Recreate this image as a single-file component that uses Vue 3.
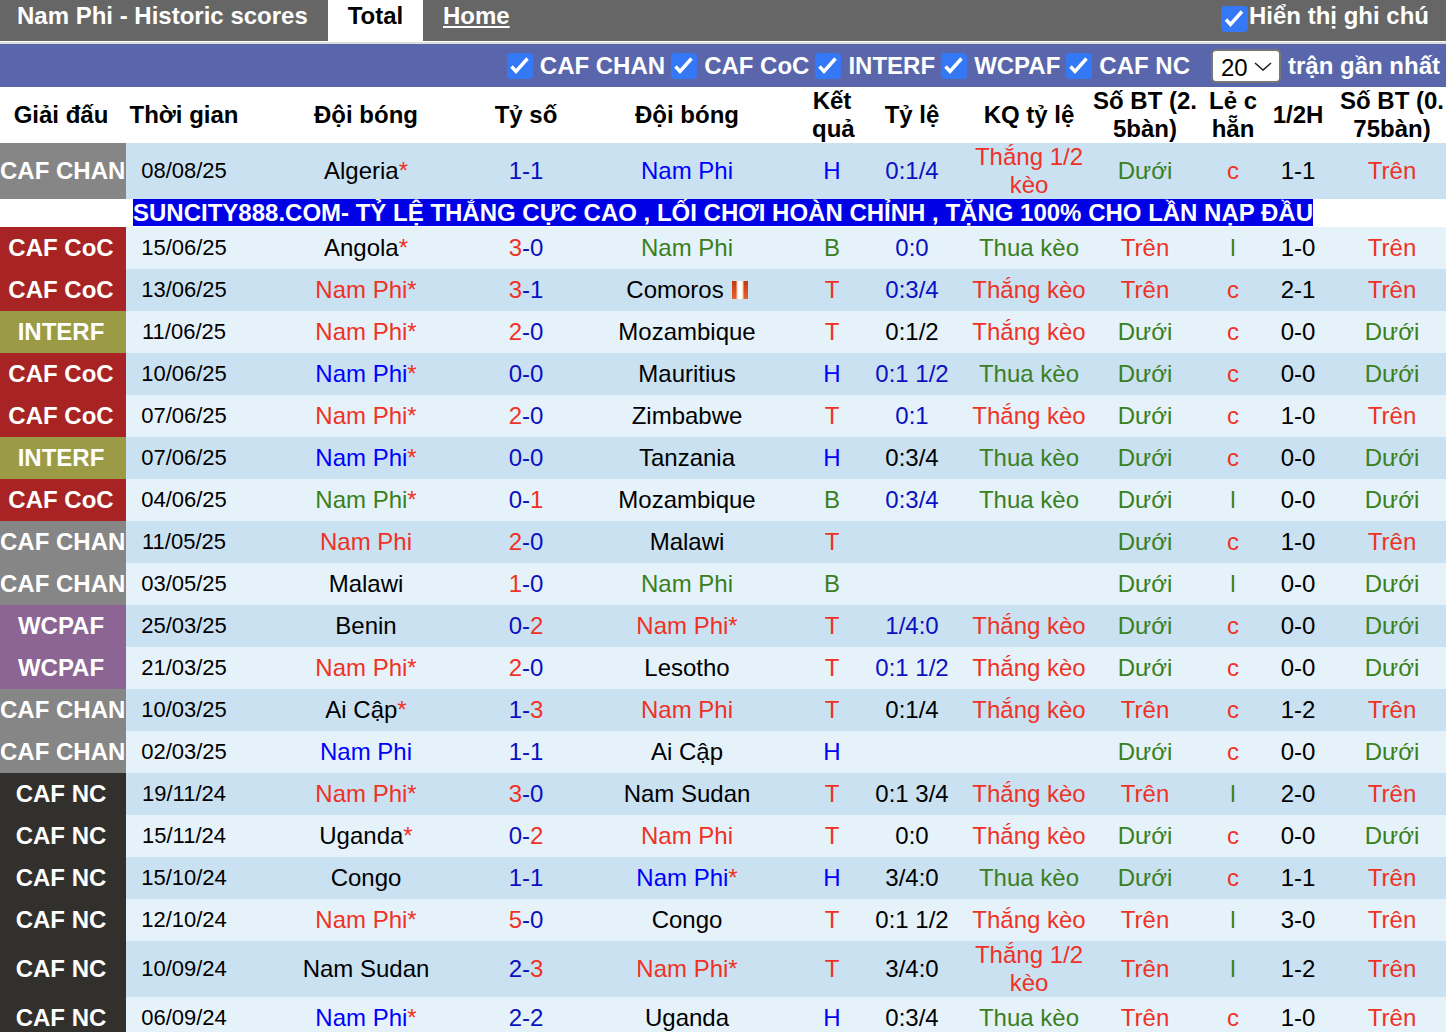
<template>
  <div class="page">
    <div class="top-bar">
      <div class="title">Nam Phi - Historic scores</div>
      <div class="tab active">Total</div>
      <a class="tab home" href="#">Home</a>
      <label class="note-toggle">
        <span class="check">
          <svg viewBox="0 0 26 26"><path d="M4.5 13.5 L9 18.5 L20.5 5.5" fill="none" stroke="#fff" stroke-width="3.4" /></svg>
        </span>
        Hiển thị ghi chú
      </label>
    </div>

    <div class="filter-bar">
      <label v-for="name in filters" :key="name" class="filter">
        <span class="check">
          <svg viewBox="0 0 26 26"><path d="M4.5 13.5 L9 18.5 L20.5 5.5" fill="none" stroke="#fff" stroke-width="3.4" /></svg>
        </span>
        {{ name }}
      </label>
      <div class="select-box">
        <span>20</span>
        <svg class="chevron" viewBox="0 0 18 9"><path d="M1 1 L9 8 L17 1" fill="none" stroke="#222" stroke-width="1.6" /></svg>
      </div>
      <span class="recent">trận gần nhất</span>
    </div>

    <table class="scores">
      <colgroup>
        <col v-for="(w, i) in colWidths" :key="i" :style="{ width: w + 'px' }" />
      </colgroup>
      <thead>
        <tr>
          <th v-for="h in headers" :key="h">{{ h }}</th>
        </tr>
      </thead>
      <tbody>
        <template v-for="(m, i) in matches" :key="i">
          <tr :class="i % 2 === 0 ? 'dark' : 'light'">
            <td class="league" :class="leagueClass[m.league]"><span>{{ m.league }}</span></td>
            <td class="date">{{ m.date }}</td>
            <td :class="teamColor(m, m.home)">{{ m.home }}<span v-if="m.homeStar" class="star">*</span></td>
            <td>
              <span :class="scoreParts(m).leftClass">{{ scoreParts(m).left }}</span><span class="blue">-</span><span :class="scoreParts(m).rightClass">{{ scoreParts(m).right }}</span>
            </td>
            <td :class="teamColor(m, m.away)">
              {{ m.away }}<span v-if="m.awayStar" class="star">*</span>
              <span v-if="m.flag" class="flag"></span>
            </td>
            <td :class="resultColor[m.result]">{{ m.result }}</td>
            <td :class="{ blue: m.oddsBlue }">{{ m.odds }}</td>
            <td :class="m.kq.startsWith('Thua') ? 'green' : 'red'">{{ m.kq }}</td>
            <td :class="m.bt === 'Dưới' ? 'green' : 'red'">{{ m.bt }}</td>
            <td :class="m.lc === 'c' ? 'red' : 'green'">{{ m.lc }}</td>
            <td>{{ m.half }}</td>
            <td :class="m.bt2 === 'Dưới' ? 'green' : 'red'">{{ m.bt2 }}</td>
          </tr>
          <tr v-if="i === 0" class="ad-row">
            <td colspan="12"><div class="ad">SUNCITY888.COM- TỶ LỆ THẮNG CỰC CAO , LỐI CHƠI HOÀN CHỈNH , TẶNG 100% CHO LẦN NẠP ĐẦU</div></td>
          </tr>
        </template>
      </tbody>
    </table>
  </div>
</template>

<script setup>
const filters = ['CAF CHAN', 'CAF CoC', 'INTERF', 'WCPAF', 'CAF NC']

const colWidths = [126, 116, 248, 72, 250, 40, 120, 114, 118, 58, 72, 112]

const headers = [
  'Giải đấu', 'Thời gian', 'Đội bóng', 'Tỷ số', 'Đội bóng', 'Kết quả',
  'Tỷ lệ', 'KQ tỷ lệ', 'Số BT (2. 5bàn)', 'Lẻ c hẵn', '1/2H', 'Số BT (0. 75bàn)'
]

const leagueClass = {
  'CAF CHAN': 'chan',
  'CAF CoC': 'coc',
  INTERF: 'interf',
  WCPAF: 'wcpaf',
  'CAF NC': 'nc'
}

const resultColor = { T: 'red', H: 'bright', B: 'green' }

const row = (league, date, home, score, away, result, odds, oddsBlue, kq, bt, lc, half, bt2, flag = false) => ({
  league,
  date,
  home: home.replace('*', ''),
  homeStar: home.endsWith('*'),
  score,
  away: away.replace('*', ''),
  awayStar: away.endsWith('*'),
  result,
  odds,
  oddsBlue,
  kq,
  bt,
  lc,
  half,
  bt2,
  flag
})

const W = 'Thắng kèo'
const L = 'Thua kèo'
const WH = 'Thắng 1/2 kèo'

const matches = [
  row('CAF CHAN', '08/08/25', 'Algeria*', '1-1', 'Nam Phi', 'H', '0:1/4', true, WH, 'Dưới', 'c', '1-1', 'Trên'),
  row('CAF CoC', '15/06/25', 'Angola*', '3-0', 'Nam Phi', 'B', '0:0', true, L, 'Trên', 'l', '1-0', 'Trên'),
  row('CAF CoC', '13/06/25', 'Nam Phi*', '3-1', 'Comoros', 'T', '0:3/4', true, W, 'Trên', 'c', '2-1', 'Trên', true),
  row('INTERF', '11/06/25', 'Nam Phi*', '2-0', 'Mozambique', 'T', '0:1/2', false, W, 'Dưới', 'c', '0-0', 'Dưới'),
  row('CAF CoC', '10/06/25', 'Nam Phi*', '0-0', 'Mauritius', 'H', '0:1 1/2', true, L, 'Dưới', 'c', '0-0', 'Dưới'),
  row('CAF CoC', '07/06/25', 'Nam Phi*', '2-0', 'Zimbabwe', 'T', '0:1', true, W, 'Dưới', 'c', '1-0', 'Trên'),
  row('INTERF', '07/06/25', 'Nam Phi*', '0-0', 'Tanzania', 'H', '0:3/4', false, L, 'Dưới', 'c', '0-0', 'Dưới'),
  row('CAF CoC', '04/06/25', 'Nam Phi*', '0-1', 'Mozambique', 'B', '0:3/4', true, L, 'Dưới', 'l', '0-0', 'Dưới'),
  row('CAF CHAN', '11/05/25', 'Nam Phi', '2-0', 'Malawi', 'T', '', false, '', 'Dưới', 'c', '1-0', 'Trên'),
  row('CAF CHAN', '03/05/25', 'Malawi', '1-0', 'Nam Phi', 'B', '', false, '', 'Dưới', 'l', '0-0', 'Dưới'),
  row('WCPAF', '25/03/25', 'Benin', '0-2', 'Nam Phi*', 'T', '1/4:0', true, W, 'Dưới', 'c', '0-0', 'Dưới'),
  row('WCPAF', '21/03/25', 'Nam Phi*', '2-0', 'Lesotho', 'T', '0:1 1/2', true, W, 'Dưới', 'c', '0-0', 'Dưới'),
  row('CAF CHAN', '10/03/25', 'Ai Cập*', '1-3', 'Nam Phi', 'T', '0:1/4', false, W, 'Trên', 'c', '1-2', 'Trên'),
  row('CAF CHAN', '02/03/25', 'Nam Phi', '1-1', 'Ai Cập', 'H', '', false, '', 'Dưới', 'c', '0-0', 'Dưới'),
  row('CAF NC', '19/11/24', 'Nam Phi*', '3-0', 'Nam Sudan', 'T', '0:1 3/4', false, W, 'Trên', 'l', '2-0', 'Trên'),
  row('CAF NC', '15/11/24', 'Uganda*', '0-2', 'Nam Phi', 'T', '0:0', false, W, 'Dưới', 'c', '0-0', 'Dưới'),
  row('CAF NC', '15/10/24', 'Congo', '1-1', 'Nam Phi*', 'H', '3/4:0', false, L, 'Dưới', 'c', '1-1', 'Trên'),
  row('CAF NC', '12/10/24', 'Nam Phi*', '5-0', 'Congo', 'T', '0:1 1/2', false, W, 'Trên', 'l', '3-0', 'Trên'),
  row('CAF NC', '10/09/24', 'Nam Sudan', '2-3', 'Nam Phi*', 'T', '3/4:0', false, WH, 'Trên', 'l', '1-2', 'Trên'),
  row('CAF NC', '06/09/24', 'Nam Phi*', '2-2', 'Uganda', 'H', '0:3/4', false, L, 'Trên', 'c', '1-0', 'Trên')
]

const teamColor = (m, team) => (team === 'Nam Phi' ? resultColor[m.result] : '')

const scoreParts = (m) => {
  const [left, right] = m.score.split('-')
  return {
    left,
    right,
    leftClass: +left > +right ? 'red' : 'blue',
    rightClass: +right > +left ? 'red' : 'blue'
  }
}
</script>

<style>
html, body {
  margin: 0;
  overflow: hidden;
}
</style>

<style scoped>
* {
  box-sizing: border-box;
}

.page {
  width: 1446px;
  font-family: 'Liberation Sans', Arial, sans-serif;
  font-size: 24px;
  line-height: 28px;
  color: #000;
  background: #fff;
}

.top-bar {
  display: flex;
  align-items: stretch;
  height: 41px;
  background: #666;
  color: #fff;
  font-weight: bold;
}

.title {
  width: 328px;
  padding: 2px 0 0 17px;
}

.tab {
  padding: 2px 20px 0;
}

.tab.active {
  width: 95px;
  height: 42px;
  background: #fff;
  color: #000;
  text-align: center;
  padding: 2px 0 0;
}

.tab.home {
  color: #fff;
  text-decoration: underline;
}

.note-toggle {
  display: flex;
  align-items: flex-start;
  margin-left: auto;
  margin-right: 17px;
  padding-top: 2px;
}

.note-toggle .check {
  margin-top: 4px;
  margin-right: 1px;
  width: 27px;
}

.check {
  display: inline-block;
  width: 26px;
  height: 26px;
  background: #3478f6;
  border-radius: 4px;
  flex: none;
}

.check svg {
  display: block;
  width: 100%;
  height: 100%;
}

.filter-bar {
  display: flex;
  align-items: center;
  justify-content: flex-end;
  height: 45px;
  margin-top: 1px;
  border-top: 2px solid #ddd;
  padding-right: 6px;
  background: #5966ab;
  color: #fff;
  font-weight: bold;
}

.filter {
  display: flex;
  align-items: center;
  gap: 7px;
  margin-right: 6px;
}

.select-box {
  position: relative;
  width: 70px;
  height: 34px;
  margin: 0 7px 0 15px;
  padding: 3px 0 0 8px;
  background: #fff;
  border: 2px solid #777;
  border-radius: 5px;
  color: #000;
  font-weight: normal;
}

.chevron {
  position: absolute;
  right: 7px;
  top: 11px;
  width: 18px;
  height: 9px;
}

.scores {
  width: 1446px;
  table-layout: fixed;
  border-collapse: collapse;
}

th {
  height: 56px;
  padding: 0;
  font-weight: bold;
  text-align: center;
}

td {
  height: 42px;
  padding: 0;
  text-align: center;
}

th:first-child,
td.league {
  padding-right: 4px;
}

th:last-child,
td:last-child {
  padding-left: 4px;
}

.dark td {
  background: #cae1f2;
}

.light td {
  background: #e6f2fa;
}

td.league {
  color: #fff;
  font-weight: bold;
  white-space: nowrap;
  overflow: hidden;
}

td.chan { background: #868686; }
td.coc { background: #a82424; }
td.interf { background: #9b9a45; }
td.wcpaf { background: #8c6594; }
td.nc { background: #32302d; }

.date {
  font-size: 22px;
}

.red { color: #ef3225; }
.green { color: #3a8020; }
.blue { color: #0b10c0; }
.bright { color: #0000ff; }

.star {
  color: #ef3225;
}

.flag {
  display: inline-block;
  width: 16px;
  height: 18px;
  margin-left: 8px;
  vertical-align: -1px;
  background:
    linear-gradient(90deg, transparent 0 25%, #f6c9a8 31%, #fff 40% 60%, #f6c9a8 69%, transparent 75%),
    linear-gradient(180deg, #c23a16, #e8622c);
}

.ad-row td {
  height: 28px;
  padding: 0;
  background: #fff;
}

.ad {
  width: 1180px;
  height: 27px;
  margin: 0 0 1px 133px;
  background: #0000e6;
  color: #fff;
  font-weight: bold;
  line-height: 27px;
  white-space: nowrap;
  overflow: hidden;
}
</style>
